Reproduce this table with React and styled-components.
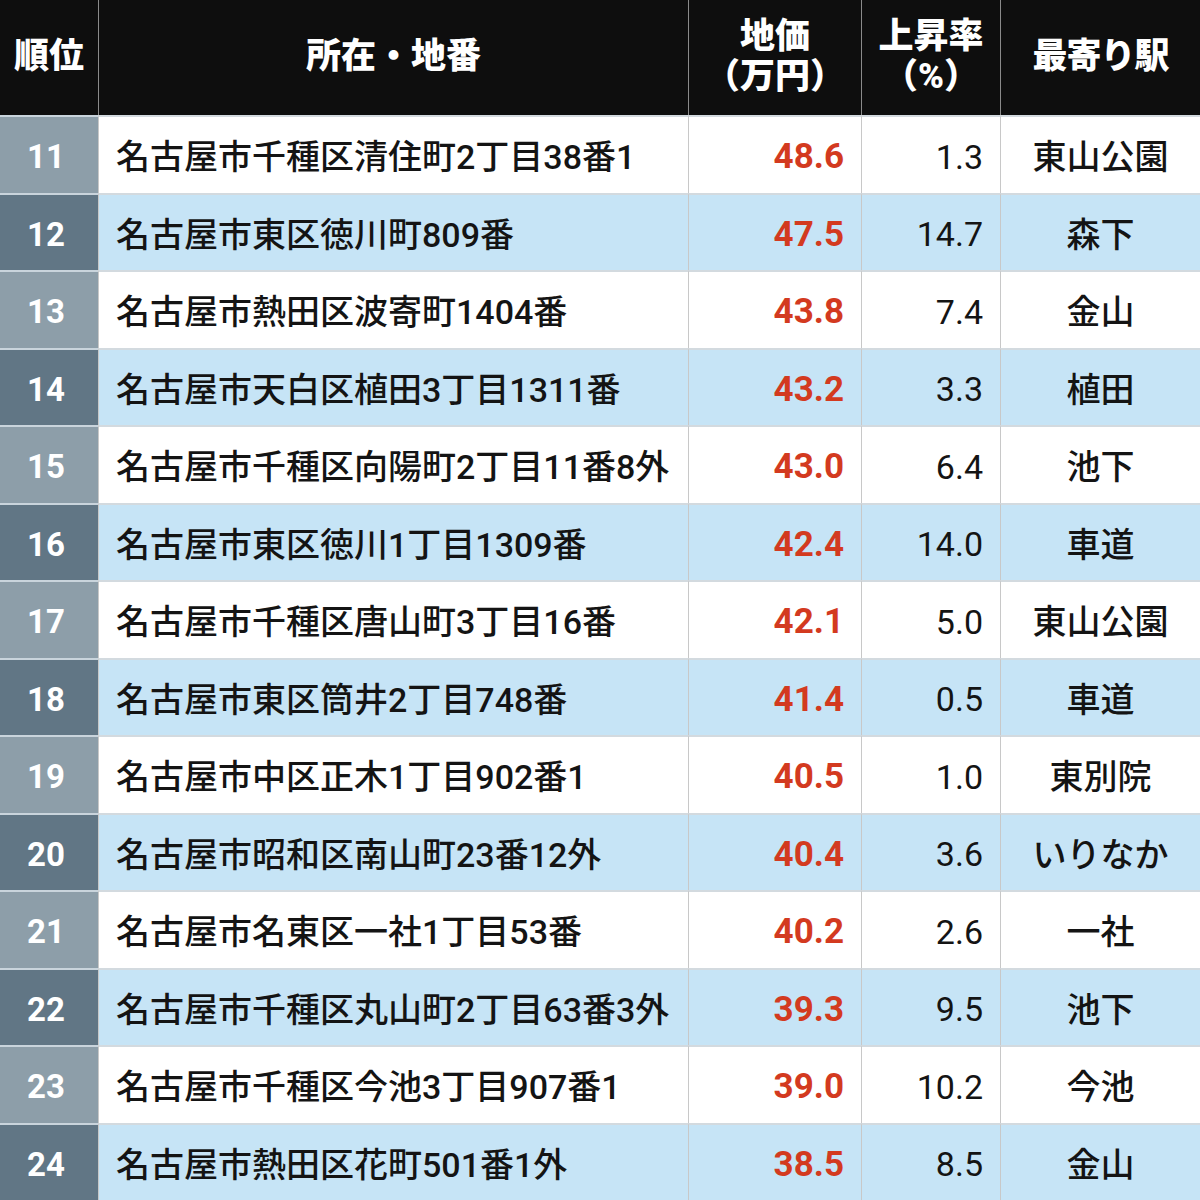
import React from "react";
import styled, { createGlobalStyle } from "styled-components";

const Global = createGlobalStyle`
  html, body { margin: 0; padding: 0; background: #fff; }
  body { font-family: Roboto, "Noto Sans CJK JP", sans-serif; }
`;

const Table = styled.div`
  width: 1200px;
  height: 1200px;
  display: grid;
  grid-template-columns: 98px 590px 173px 139px 200px;
  grid-template-rows: 115px repeat(14, 77.5px);
  background: #c9cdd0;
`;

const Head = styled.div`
  background: #0e0e0e;
  color: #fff;
  font-family: Roboto, "Noto Sans CJK JP", sans-serif;
  font-weight: 900;
  font-size: 35px;
  line-height: 40px;
  display: flex;
  align-items: center;
  justify-content: center;
  text-align: center;
  border-left: ${(p) => (p.$first ? "none" : "1px solid #8a8a8a")};
  box-sizing: border-box;
  padding-bottom: 2px;
  letter-spacing: ${(p) => (p.$tight ? "-1px" : "0")};
`;

const Rank = styled.div`
  background: ${(p) => (p.$alt ? "#617685" : "#8d9ea9")};
  color: #fff;
  font-weight: 700;
  font-size: 33px;
  display: flex;
  align-items: center;
  justify-content: center;
  padding: 4px 6px 0 0;
  box-sizing: border-box;
  border-top: 2px solid #c9d4dc;
`;

const Cell = styled.div`
  background: ${(p) => (p.$alt ? "#c6e4f6" : "#ffffff")};
  color: #141414;
  font-size: 34px;
  font-weight: ${(p) => p.$weight || 500};
  display: flex;
  align-items: center;
  justify-content: ${(p) => p.$align || "flex-start"};
  padding: ${(p) => (p.$num ? "4px" : "0")} ${(p) => (p.$align === "flex-end" ? "17px" : "0")} 0 ${(p) => (p.$align === "flex-start" ? "17px" : "0")};
  box-sizing: border-box;
  border-top: 2px solid #d3dadf;
  border-left: 1px solid #c8c8c8;
  white-space: nowrap;
`;

const Price = styled(Cell)`
  color: #d33a1f;
  font-weight: 700;
  font-size: 35px;
`;

const rows = [
  ["11", "名古屋市千種区清住町2丁目38番1", "48.6", "1.3", "東山公園"],
  ["12", "名古屋市東区徳川町809番", "47.5", "14.7", "森下"],
  ["13", "名古屋市熱田区波寄町1404番", "43.8", "7.4", "金山"],
  ["14", "名古屋市天白区植田3丁目1311番", "43.2", "3.3", "植田"],
  ["15", "名古屋市千種区向陽町2丁目11番8外", "43.0", "6.4", "池下"],
  ["16", "名古屋市東区徳川1丁目1309番", "42.4", "14.0", "車道"],
  ["17", "名古屋市千種区唐山町3丁目16番", "42.1", "5.0", "東山公園"],
  ["18", "名古屋市東区筒井2丁目748番", "41.4", "0.5", "車道"],
  ["19", "名古屋市中区正木1丁目902番1", "40.5", "1.0", "東別院"],
  ["20", "名古屋市昭和区南山町23番12外", "40.4", "3.6", "いりなか"],
  ["21", "名古屋市名東区一社1丁目53番", "40.2", "2.6", "一社"],
  ["22", "名古屋市千種区丸山町2丁目63番3外", "39.3", "9.5", "池下"],
  ["23", "名古屋市千種区今池3丁目907番1", "39.0", "10.2", "今池"],
  ["24", "名古屋市熱田区花町501番1外", "38.5", "8.5", "金山"],
];

export default function App() {
  return (
    <>
      <Global />
      <Table>
        <Head $first>順位</Head>
        <Head>所在・地番</Head>
        <Head>地価<br />（万円）</Head>
        <Head>上昇率<br />（%）</Head>
        <Head $tight>最寄り駅</Head>
        {rows.map((r, i) => {
          const alt = i % 2 === 1;
          return (
            <React.Fragment key={r[0]}>
              <Rank $alt={alt}>{r[0]}</Rank>
              <Cell $alt={alt} $align="flex-start">{r[1]}</Cell>
              <Price $alt={alt} $align="flex-end" $num>{r[2]}</Price>
              <Cell $alt={alt} $align="flex-end" $num $weight={400}>{r[3]}</Cell>
              <Cell $alt={alt} $align="center">{r[4]}</Cell>
            </React.Fragment>
          );
        })}
      </Table>
    </>
  );
}
